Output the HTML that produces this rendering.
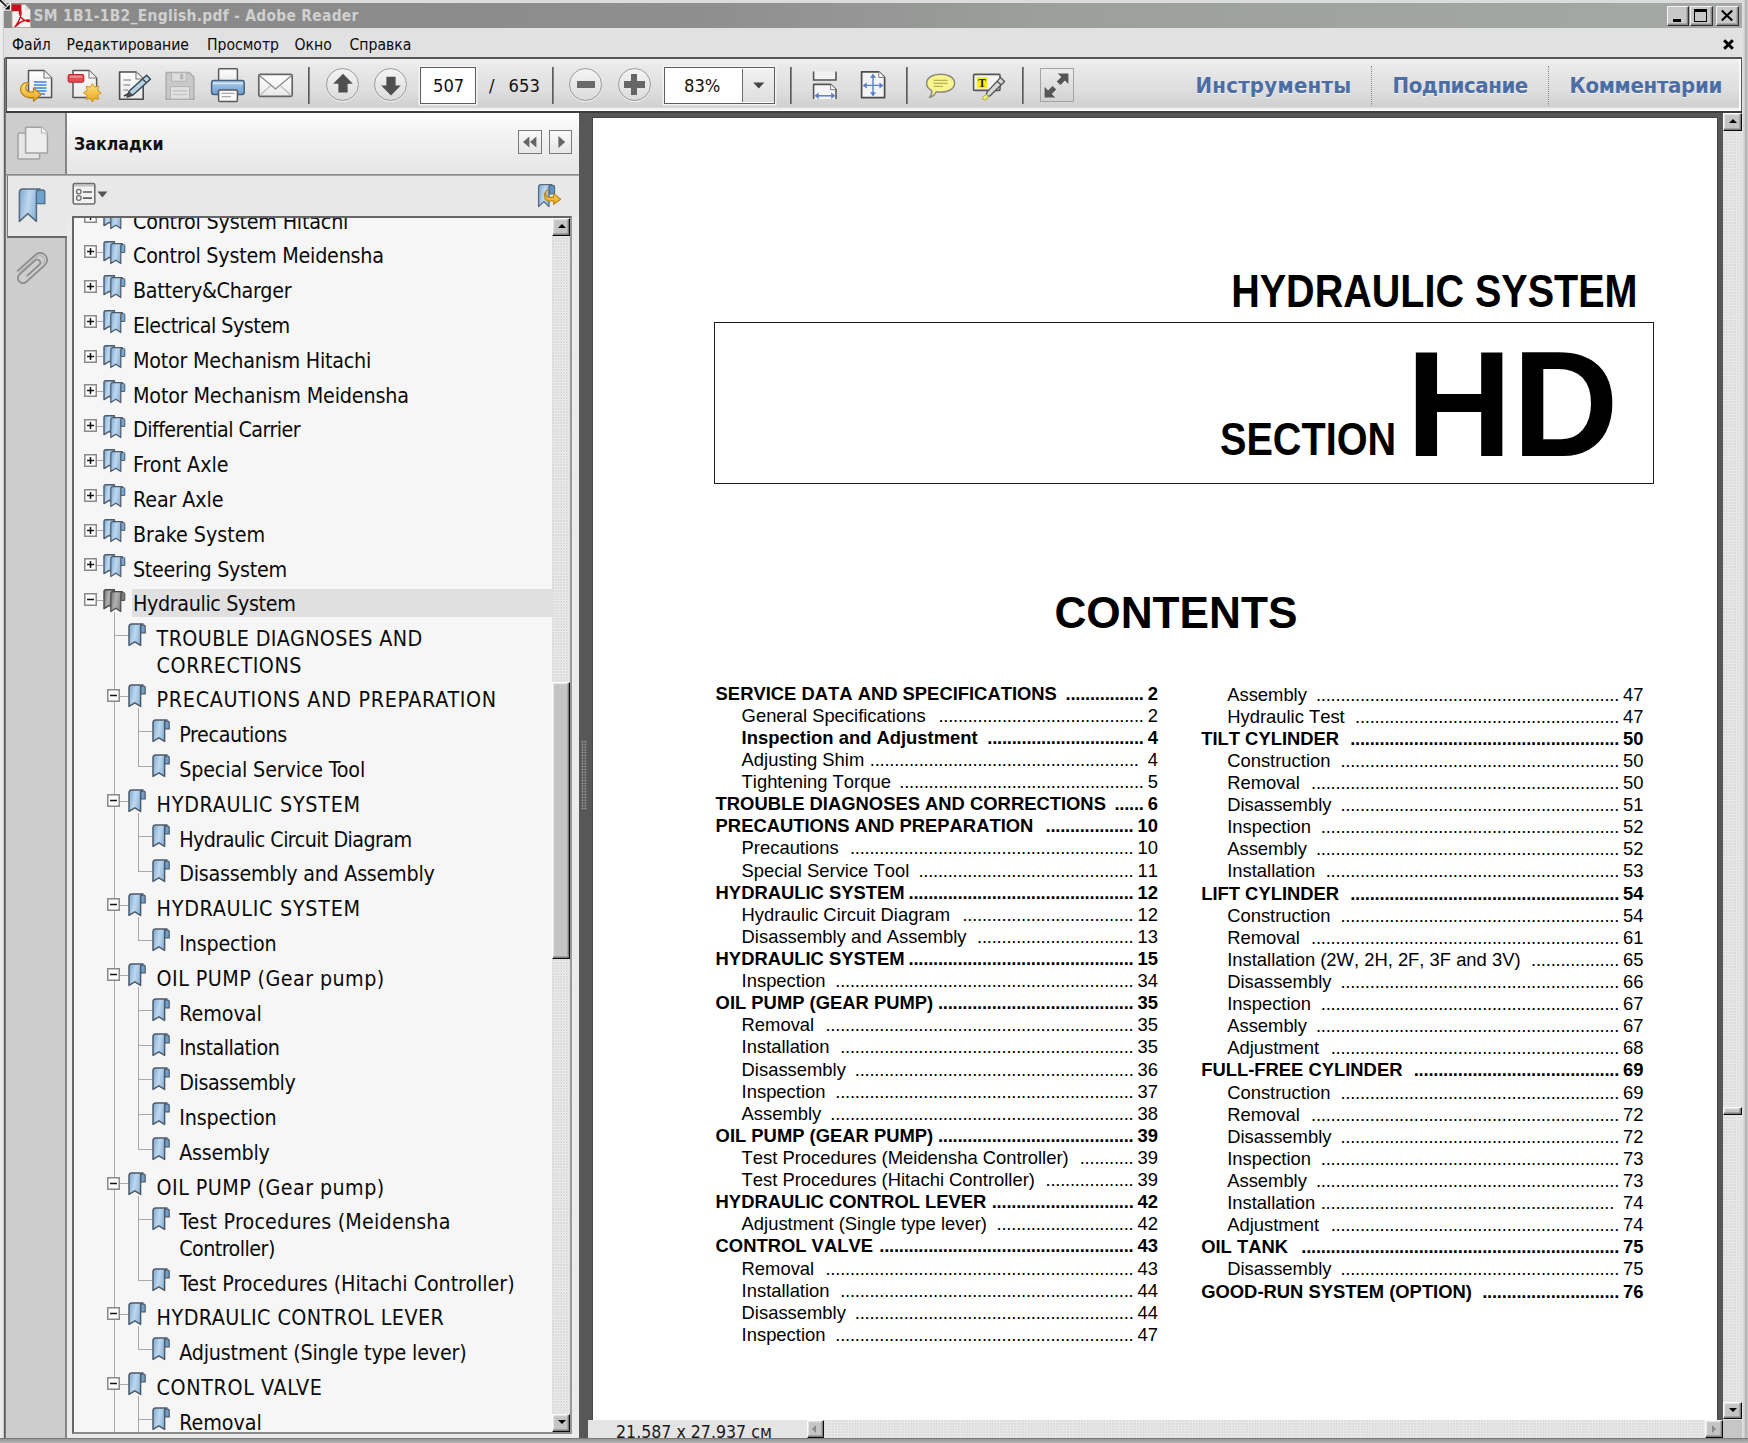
<!DOCTYPE html>
<html lang="ru">
<head>
<meta charset="utf-8">
<title>SM 1B1-1B2_English.pdf - Adobe Reader</title>
<style>
*{box-sizing:border-box;margin:0;padding:0}
html,body{width:1748px;height:1443px;overflow:hidden;background:#e2e2e2}
body{position:relative;font-family:"DejaVu Sans Condensed","DejaVu Sans","Liberation Sans",sans-serif;font-stretch:condensed;color:#000}
.abs{position:absolute}
svg{position:absolute;overflow:visible}
/* window frame */
#frameL{left:0;top:0;width:5px;height:1443px;background:linear-gradient(90deg,#ededed 0,#e8e8e8 50%,#c6c6c6 75%,#aeaeae 100%)}
#frameLd{left:4px;top:58px;width:2px;height:1381px;background:linear-gradient(90deg,#4e4e4e,#8a8a8a)}
#frameT{left:0;top:0;width:1748px;height:3px;background:#dcdcdc}
#frameR{left:1742px;top:0;width:6px;height:1443px;background:linear-gradient(90deg,#e6e6e6 0,#cfcfcf 40%,#b4b4b4 60%,#c4c4c4 100%)}
#frameB{left:0;top:1438px;width:1748px;height:5px;background:linear-gradient(180deg,#6a6a6a 0,#9a9a9a 30%,#b4b4b4 100%)}
/* title */
#title{left:4px;top:3px;width:1738px;height:25px;background:linear-gradient(90deg,#898989 0%,#8e8e8e 40%,#9c9f9c 60%,#a5a9a5 100%)}
#title .txt{left:29.6px;top:3.2px;font-weight:bold;font-size:15.4px;letter-spacing:.3px;line-height:20px;color:#d0d0d0;white-space:nowrap}
.wbtn{top:3px;height:20px;background:#c8c8c8;border:1.4px solid;border-color:#f4f4f4 #303030 #303030 #f4f4f4;box-shadow:inset -1.4px -1.4px 0 #888}
/* menu */
#menu{left:4px;top:28px;width:1738px;height:30px;background:#e1e1e1}
#menu span{position:absolute;top:6.7px;font-size:15.6px;line-height:20px;color:#0a0a0a;white-space:nowrap}
/* toolbar */
#tb{left:5px;top:57px;width:1737px;height:56px;background:#555}
#tbin{left:7px;top:59px;width:1734px;height:52px;background:linear-gradient(180deg,#f2f2f2 0,#eaeaea 12%,#dedede 60%,#d0d0d0 92%,#f4f4f4 96%,#fff 100%);border-right:2px solid #f8f8f8}
.sep{top:67px;width:2px;height:37px;background:linear-gradient(90deg,#5c5c5c 0,#5c5c5c 60%,#c8c8c8 100%)}
.circ{width:33px;height:33px;border-radius:50%;border:1.3px solid #9a9a9a;background:linear-gradient(180deg,#f4f4f4,#dcdcdc);top:68px;box-shadow:0 1px 0 #f2f2f2}
.inp{top:67px;height:37px;background:#fff;border:1.6px solid #5e5e5e;box-shadow:0 0 0 1.5px rgba(245,245,245,.9)}
.tbt{top:75.2px;font-size:18.2px;line-height:22px;white-space:nowrap;color:#111}
.pane{top:70.6px;font-weight:bold;font-size:22px;line-height:30px;color:#4a6da6;white-space:nowrap;text-shadow:0 1px 0 #f4f4f4}
.dots{top:66px;width:0;height:40px;border-left:1.5px dotted #8a8a8a}
/* left */
#nav{left:6px;top:113px;width:60px;height:1325px;background:#cdcdcd}
#navdiv{left:65px;top:113px;width:2px;height:1325px;background:#858585}
#panel{left:67px;top:113px;width:512px;height:1325px;background:#ebebeb}
#phead{left:67px;top:113px;width:512px;height:61px;background:linear-gradient(180deg,#fff 0,#f4f4f4 30%,#e6e6e6 100%)}
#pline{left:6px;top:174px;width:573px;height:2px;background:linear-gradient(180deg,#858585,#b0b0b0)}
#seltab{left:7px;top:176px;width:59.5px;height:62px;background:#e8e8e8;border-left:1.5px solid #7a7a7a;border-bottom:2px solid #6a6a6a}
#ptool{left:67px;top:176px;width:512px;height:41px;background:#e8e8e8}
#ptitle{left:74px;top:131.6px;font-weight:bold;font-size:17.6px;line-height:24px;color:#111}
.cbtn{top:130.4px;width:23.4px;height:23.4px;border:1.8px solid #7a7a7a;background:linear-gradient(180deg,#fafafa,#e6e6e6)}
#tree{left:72px;top:216px;width:500px;height:1218px;background:#f6f6f6;border:2px solid;border-color:#666 #9a9a9a #8a8a8a #666;overflow:hidden}
#treein{left:0;top:0;width:478px;height:1214px;overflow:hidden;font-size:21.3px;line-height:26.4px;color:#0b0b0b}
.row{position:absolute;left:0;width:478px;white-space:nowrap}
.row .t{position:absolute;top:5.6px}
.row.u .t{font-size:22.1px}
.hl{position:absolute;left:57.5px;top:6px;width:421px;height:28.4px;background:#e0e0e0}
.xb{position:absolute;width:12.8px;height:12.8px;top:10.4px;background:#fff;border:1.5px solid #8a8a8a}
.xb i{position:absolute;left:1.8px;right:1.8px;top:4.1px;height:1.6px;background:#111}
.xb b{position:absolute;top:1.8px;bottom:1.8px;left:4.1px;width:1.6px;background:#111}
.ln{position:absolute;background:#a8a8a8}
/* scrollbars */
.track{background-color:#e4e4e4;background-image:conic-gradient(#f3f3f3 25%,#d6d6d6 0 50%,#f3f3f3 0 75%,#d6d6d6 0);background-size:2.8px 2.8px}
.b3d{background:#c4c4c4;border:1.6px solid;border-color:#fcfcfc #0c0c0c #0c0c0c #fcfcfc;box-shadow:inset -1.4px -1.4px 0 #7e7e7e,inset 1.2px 1.2px 0 #e2e2e2}
.ar{position:absolute;width:0;height:0;border-style:solid}
/* doc */
#doc{left:579px;top:113px;width:1163px;height:1325px;background:#575757}
#pdfpage{left:593px;top:119px;width:1124px;height:1301px;background:#fff;overflow:hidden;font-kerning:none;font-stretch:normal;font-family:"Liberation Sans",sans-serif}
#status{left:588px;top:1420px;width:219px;height:19px;background:#e4e4e4;font-size:17.6px;line-height:21px;color:#1a1a1a;white-space:nowrap;overflow:hidden}
.toc{position:absolute;font-size:18.4px;line-height:22.11px;color:#000}
.toc div{display:flex;height:22.11px;white-space:nowrap;align-items:baseline}
.toc .h{font-weight:bold}
.toc .s{padding-left:26px}
.toc .d{flex:1;overflow:hidden;direction:rtl;text-align:right;margin:0;letter-spacing:-.22px}
.toc .n{padding-left:4px}
</style>
</head>
<body>
<div class="abs" id="frameT"></div><div class="abs" id="frameL"></div><div class="abs" id="frameR"></div>
<div class="abs" id="title"><div class="abs txt">SM 1B1-1B2_English.pdf - Adobe Reader</div>
<div class="abs wbtn" style="left:1663px;width:22px"><i class="abs" style="left:5px;top:12px;width:8px;height:2.8px;background:#000"></i></div>
<div class="abs wbtn" style="left:1685.5px;width:23px"><i class="abs" style="left:3.5px;top:2px;width:13px;height:12.5px;border:1.6px solid #000;border-top-width:3px"></i></div>
<div class="abs wbtn" style="left:1712px;width:23px"><svg style="left:4px;top:3px" width="12" height="11" viewBox="0 0 12 11"><path d="M0.8 0.5 L11.2 10.5 M11.2 0.5 L0.8 10.5" stroke="#000" stroke-width="2.1" fill="none"/></svg></div>
</div>
<div class="abs" id="menu"><span style="left:8px">Файл</span><span style="left:62.5px">Редактирование</span><span style="left:203px">Просмотр</span><span style="left:290.5px">Окно</span><span style="left:345.5px">Справка</span>
<svg style="left:1719px;top:11px" width="11" height="11" viewBox="0 0 11 11"><path d="M1.2 1.2 L9.8 9.8 M9.8 1.2 L1.2 9.8" stroke="#000" stroke-width="3" fill="none"/></svg></div>
<svg style="left:11px;top:4px" width="20" height="24" viewBox="0 0 20 24">
<path d="M1 0.5 H14 L19.5 6 V23.5 H1 Z" fill="#f6f2f2" stroke="#b9a3a3" stroke-width="1"/>
<path d="M14 0.5 V6 H19.5 Z" fill="#dcdcdc"/>
<rect x="0.6" y="0.4" width="9.8" height="6.8" fill="#c4111c"/>
<path d="M5 21.5 C7.5 18 9.8 13 10 8.5 C10.2 6.5 8.2 6.6 8.4 8.8 C8.9 13.5 13 17.2 17 17.6 C19.2 17.8 19 15.8 17 15.9 C12.5 16.2 8 18.6 5.6 21.6 C4.4 23 3.6 22.6 5 21.5 Z" fill="none" stroke="#c4111c" stroke-width="1.5"/>
</svg>
<svg style="left:0;top:0" width="12" height="12" viewBox="0 0 12 12"><path d="M0 0 L6.5 6.5" stroke="#f4f4f4" stroke-width="3.4"/><path d="M10.4 10.2 L10.4 3 L3.2 10.2 Z" fill="#0a0a0a" stroke="#f4f4f4" stroke-width="1.2"/><path d="M0 0 L6.5 6.5" stroke="#111" stroke-width="1.7"/></svg>
<div class="abs" id="tb"></div><div class="abs" id="tbin"></div><div class="abs" style="left:5px;top:111.2px;width:1737px;height:2.2px;background:#3e3e3e"></div><svg width="0" height="0"><defs>
<linearGradient id="gDoc" x1="0" y1="0" x2="0" y2="1"><stop offset="0" stop-color="#ffffff"/><stop offset="1" stop-color="#e9e9e9"/></linearGradient>
<linearGradient id="gGold" x1="0" y1="0" x2="0" y2="1"><stop offset="0" stop-color="#ffe680"/><stop offset="1" stop-color="#e9a21a"/></linearGradient>
<linearGradient id="gBlue" x1="0" y1="0" x2="0" y2="1"><stop offset="0" stop-color="#a9cdee"/><stop offset="1" stop-color="#6b9fd2"/></linearGradient>
<linearGradient id="gBm" x1="0" y1="0" x2="1" y2="0.25"><stop offset="0" stop-color="#7ba7d0"/><stop offset="0.5" stop-color="#bfd8ee"/><stop offset="1" stop-color="#84afd6"/></linearGradient>
<linearGradient id="gBmG" x1="0" y1="0" x2="1" y2="0.25"><stop offset="0" stop-color="#6e6e6e"/><stop offset="0.5" stop-color="#b4b4b4"/><stop offset="1" stop-color="#7c7c7c"/></linearGradient>
<linearGradient id="gBtn" x1="0" y1="0" x2="0" y2="1"><stop offset="0" stop-color="#ececec"/><stop offset="1" stop-color="#cfcfcf"/></linearGradient>
</defs></svg>
<!-- icon1: convert -->
<svg style="left:18px;top:67px" width="36" height="36" viewBox="0 0 36 36">
<path d="M10.5 3.6 H26 L33.6 11 V30.6 H10.5 Z" fill="url(#gDoc)" stroke="#555" stroke-width="1.5" stroke-linejoin="round"/>
<path d="M26 3.6 V11 H33.6" fill="#f4f4f4" stroke="#777" stroke-width="1.1"/>
<path d="M16 15 H28.5 M16 18 H28.5 M16 21 H28.5 M16 24 H28.5 M20 27 H27" stroke="#3b82e0" stroke-width="1.7"/>
<path d="M10.5 15.6 C4 15 0.8 21 3.6 26 C6 30 11 31 15.5 30.3 V34.2 L23 27.6 L15.5 21 V24.8 C12 25.4 9 24.6 8 22 C7.2 19.6 8.6 17.6 10.5 17 Z" fill="url(#gGold)" stroke="#b8800f" stroke-width="1.2" stroke-linejoin="round"/>
</svg>
<!-- icon2: create pdf -->
<svg style="left:66px;top:67px" width="36" height="36" viewBox="0 0 36 36">
<path d="M7 3.6 H23 L30.6 11 V30.6 H7 Z" fill="url(#gDoc)" stroke="#555" stroke-width="1.5" stroke-linejoin="round"/>
<path d="M23 3.6 V11 H30.6" fill="#f4f4f4" stroke="#777" stroke-width="1.1"/>
<rect x="2.2" y="7.6" width="15.6" height="7.6" rx="1.6" fill="#ea4a52" stroke="#b3262e" stroke-width="1.1"/>
<rect x="3.4" y="8.6" width="13.2" height="2.2" rx="1" fill="#f58a8e"/>
<polygon points="26.4,16.6 28.5,20.2 32.6,19.2 31.6,23.3 35.2,25.8 31.6,28.3 32.6,32.4 28.5,31.4 26.4,35 24.3,31.4 20.2,32.4 21.2,28.3 17.6,25.8 21.2,23.3 20.2,19.2 24.3,20.2" fill="url(#gGold)" stroke="#c8951e" stroke-width="1"/>
</svg>
<!-- icon3: sign -->
<svg style="left:116px;top:67px" width="36" height="36" viewBox="0 0 36 36">
<path d="M3.6 5 H20 L27.2 12 V32.2 H3.6 Z" fill="url(#gDoc)" stroke="#4c4c4c" stroke-width="1.6" stroke-linejoin="round"/>
<path d="M20 5 V12 H27.2" fill="#f4f4f4" stroke="#777" stroke-width="1.1"/>
<path d="M7.5 13 H15 M7.5 18 H14 M7.5 23 H12" stroke="#a0a0a0" stroke-width="1.3"/>
<path d="M8 29 L14 26" stroke="#333" stroke-width="1.4"/>
<path d="M30.6 8.2 L34.4 12.2 L17 28 L11.2 30 L13 24.2 Z" fill="#b4d2e8" stroke="#3e464e" stroke-width="1.5" stroke-linejoin="round"/>
<path d="M27 12.6 L30.4 15.8" stroke="#3e464e" stroke-width="1.4"/>
<path d="M11.2 30 L13 24.2 L17 28 Z" fill="#4a4a4a"/>
</svg>
<!-- icon4: floppy (disabled) -->
<svg style="left:164px;top:70px" width="32" height="32" viewBox="0 0 32 32">
<path d="M2.2 2.6 H25.4 L29.8 7 V29.2 H2.2 Z" fill="#c9c9c9" stroke="#adadad" stroke-width="1.5" stroke-linejoin="round"/>
<rect x="7.6" y="2.8" width="14.6" height="8.4" fill="#dedede" stroke="#b4b4b4" stroke-width="1"/>
<rect x="16.2" y="4" width="3" height="5.4" fill="#b4b4b4"/>
<rect x="6.4" y="16.6" width="19.2" height="12.4" fill="#e0e0e0" stroke="#b4b4b4" stroke-width="1"/>
<path d="M9 21 H23 M9 24.6 H23" stroke="#c4c4c4" stroke-width="1.4"/>
</svg>
<!-- icon5: printer -->
<svg style="left:209px;top:66px" width="38" height="38" viewBox="0 0 38 38">
<rect x="9.6" y="2.8" width="18.8" height="13" rx="1" fill="url(#gDoc)" stroke="#5a5a5a" stroke-width="1.5"/>
<path d="M4.6 14.4 Q2.6 14.4 2.6 16.6 V26.2 Q2.6 28.4 4.8 28.4 H33 Q35.2 28.4 35.2 26.2 V16.6 Q35.2 14.4 33.2 14.4 Z" fill="url(#gBlue)" stroke="#48607a" stroke-width="1.5"/>
<path d="M4 17.4 H33.8" stroke="#d6e8f8" stroke-width="1.6"/>
<rect x="9.6" y="24" width="18.8" height="11.6" rx="1" fill="#fafafa" stroke="#5a5a5a" stroke-width="1.5"/>
<path d="M12.6 27.4 H25.4 M12.6 30.6 H22" stroke="#aaa" stroke-width="1.4"/>
</svg>
<!-- icon6: envelope -->
<svg style="left:256px;top:70px" width="40" height="30" viewBox="0 0 40 30">
<rect x="2.8" y="4.4" width="33.4" height="22" rx="1.6" fill="url(#gDoc)" stroke="#666" stroke-width="1.7"/>
<path d="M4 6 L19.5 19 L35 6" fill="none" stroke="#8a8a8a" stroke-width="1.3"/>
<path d="M4 25.4 L14.6 15.6 M35 25.4 L24.4 15.6" stroke="#b4b4b4" stroke-width="1.1"/>
</svg>
<div class="abs sep" style="left:308.4px"></div>
<!-- up/down -->
<div class="abs circ" style="left:326.4px"></div>
<svg style="left:326px;top:68px" width="34" height="34" viewBox="0 0 34 34"><path d="M17 5.8 L26.8 15.8 H21.6 V24.4 H12.4 V15.8 H7.2 Z" fill="#4f4f4f"/></svg>
<div class="abs circ" style="left:374px"></div>
<svg style="left:373.6px;top:68px" width="34" height="34" viewBox="0 0 34 34"><path d="M17 27.4 L26.8 17.4 H21.6 V8.8 H12.4 V17.4 H7.2 Z" fill="#4f4f4f"/></svg>
<div class="abs inp" style="left:420.4px;width:56px"></div>
<div class="abs tbt" style="left:433px">507</div>
<div class="abs tbt" style="left:489px">/</div>
<div class="abs tbt" style="left:508.6px">653</div>
<div class="abs sep" style="left:552px"></div>
<div class="abs circ" style="left:569.4px"></div>
<div class="abs" style="left:577px;top:81.4px;width:18px;height:6.8px;background:#6a6a6a"></div>
<div class="abs circ" style="left:617.6px"></div>
<div class="abs" style="left:623.6px;top:81.4px;width:21px;height:6.8px;background:#666"></div>
<div class="abs" style="left:630.7px;top:74.4px;width:6.8px;height:20.8px;background:#666"></div>
<div class="abs inp" style="left:663.5px;width:111.6px"></div>
<div class="abs" style="left:742.4px;top:68.6px;width:31.2px;height:33.8px;background:linear-gradient(180deg,#f2f2f2,#dedede);border-left:1.5px solid #6c6c6c"></div>
<div class="abs tbt" style="left:684px">83%</div>
<svg style="left:753px;top:82px" width="12" height="7" viewBox="0 0 12 7"><path d="M0.2 0.4 H11.4 L5.8 6.4 Z" fill="#444"/></svg>
<div class="abs sep" style="left:789.8px"></div>
<!-- fit width -->
<svg style="left:810px;top:69px" width="30" height="32" viewBox="0 0 30 32">
<path d="M3.6 2.4 V11 H26 V2.4" fill="#f2f2f2" stroke="#555" stroke-width="1.6"/>
<path d="M3.6 30 V15.4 H20.6 L26 20.6 V30" fill="#f6f6f6" stroke="#555" stroke-width="1.6" stroke-linejoin="round"/>
<path d="M20.6 15.4 V20.6 H26" fill="#fff" stroke="#777" stroke-width="1"/>
<path d="M6 26.8 H24" stroke="#5b7fc4" stroke-width="1.5"/><path d="M4.4 26.8 L8.6 23.6 V30 Z M25.4 26.8 L21.2 23.6 V30 Z" fill="#5b7fc4"/>
</svg>
<!-- fit page -->
<svg style="left:858px;top:69px" width="30" height="32" viewBox="0 0 30 32">
<path d="M3.6 2.8 H20.8 L26.6 8.4 V28.6 H3.6 Z" fill="#f4f4f4" stroke="#4c4c4c" stroke-width="1.7" stroke-linejoin="round"/>
<path d="M20.8 2.8 V8.4 H26.6" fill="#fff" stroke="#777" stroke-width="1"/>
<path d="M15 7 V25.4 M6.4 16.4 H24" stroke="#5b7fc4" stroke-width="1.4"/>
<path d="M15 4.6 L12 8.8 H18 Z M15 27.4 L12 23.2 H18 Z M4.6 16.4 L8.8 13.4 V19.4 Z M25.6 16.4 L21.4 13.4 V19.4 Z" fill="#5b7fc4"/>
</svg>
<div class="abs sep" style="left:905.8px"></div>
<!-- comment -->
<svg style="left:924px;top:71px" width="34" height="30" viewBox="0 0 34 30">
<path d="M16.6 3.2 C25 3.2 30.6 7 30.6 12.2 C30.6 17.4 25 21.2 16.6 21.2 C15 21.2 13.6 21.1 12.2 20.8 C11 23.6 9 25.6 5.6 26.4 C7.6 24.2 8.2 22 7.6 19.4 C4.4 17.8 2.6 15.2 2.6 12.2 C2.6 7 8.2 3.2 16.6 3.2 Z" fill="#f8f48e" stroke="#8c8c7c" stroke-width="1.5" stroke-linejoin="round"/>
<path d="M9.6 9.4 H23.6 M9.6 12.4 H23.6 M9.6 15.4 H19" stroke="#b9b35c" stroke-width="1.3"/>
</svg>
<!-- highlight -->
<svg style="left:970px;top:70px" width="38" height="32" viewBox="0 0 38 32">
<rect x="3.6" y="4.4" width="26.4" height="16" rx="1" fill="#f4f4f4" stroke="#555" stroke-width="1.6"/>
<rect x="6.8" y="7.2" width="10.6" height="11.2" fill="#f5f014"/>
<text x="12.1" y="16.8" font-family="Liberation Serif,serif" font-weight="bold" font-size="11.5" text-anchor="middle" fill="#222">T</text>
<path d="M30.4 7.6 L34.6 11.4 L20.4 25.6 L16.2 27 L16.8 22.4 Z" fill="#d8d8d8" stroke="#555" stroke-width="1.4" stroke-linejoin="round"/>
<path d="M27 11.2 L31 14.8" stroke="#555" stroke-width="1.3"/>
<ellipse cx="15.4" cy="27.4" rx="3.2" ry="2" transform="rotate(-35 15.4 27.4)" fill="#eef07a" stroke="#a8a83c" stroke-width="0.9"/>
</svg>
<div class="abs sep" style="left:1021.8px"></div>
<!-- read mode -->
<div class="abs" style="left:1039.6px;top:68.4px;width:34px;height:34px;border:1.5px solid #a4a4a4;background:linear-gradient(180deg,#ececec,#d2d2d2)"></div>
<svg style="left:1040px;top:69px" width="33" height="33" viewBox="0 0 33 33">
<path d="M28.4 4.4 V15 L24.9 11.5 L20.4 16 L16.8 12.4 L21.3 7.9 L17.8 4.4 Z" fill="#555"/>
<path d="M4.6 28.6 V18 L8.1 21.5 L12.6 17 L16.2 20.6 L11.7 25.1 L15.2 28.6 Z" fill="#555"/>
</svg>
<div class="abs pane" style="left:1195.4px;letter-spacing:.26px">Инструменты</div>
<div class="abs dots" style="left:1371px"></div>
<div class="abs pane" style="left:1392.6px;letter-spacing:-.45px">Подписание</div>
<div class="abs dots" style="left:1548.2px"></div>
<div class="abs pane" style="left:1569.6px;letter-spacing:-.32px">Комментарии</div>
<div class="abs" id="nav"></div><div class="abs" id="panel"></div><div class="abs" id="phead"></div><div class="abs" id="navdiv"></div>
<div class="abs" id="ptool"></div><div class="abs" id="pline"></div><div class="abs" id="seltab"></div>
<div class="abs" id="ptitle">Закладки</div>
<!-- pages icon -->
<svg style="left:14px;top:122px" width="40" height="42" viewBox="0 0 40 42">
<rect x="4" y="11" width="21.6" height="26" rx="1.2" fill="#e6e6e6" stroke="#a2a2a2" stroke-width="1.5"/>
<path d="M11.6 5.2 H27.4 L33.4 11 V31 H11.6 Z" fill="#eeeeee" stroke="#a2a2a2" stroke-width="1.5" stroke-linejoin="round"/>
<path d="M27.4 5.2 V11 H33.4" fill="#fafafa" stroke="#b0b0b0" stroke-width="1"/>
</svg>
<!-- bookmark tab icon -->
<svg style="left:16px;top:186px" width="32" height="38" viewBox="0 0 32 38">
<path d="M20 4 H26.8 Q28.8 4 28.8 6 V17.6 H20 Z" fill="#6fa3cf" stroke="#566a80" stroke-width="1.3"/>
<path d="M3.4 6.4 Q3.4 3 7 3 H24 Q20.4 3.4 20.4 7 V35.4 L11.8 27.6 L3.4 35.4 Z" fill="url(#gBm)" stroke="#566a80" stroke-width="1.5" stroke-linejoin="round"/>
</svg>
<!-- paperclip -->
<svg style="left:8.6px;top:249px" width="40" height="42" viewBox="0 0 40 42">
<g transform="rotate(48 20 21) translate(0 -1)" fill="none" stroke="#8a8a8a" stroke-width="1.7" stroke-linecap="round">
<path d="M13 31 V7 A7 7 0 0 1 27 7 V32 A5 5 0 0 1 17 32 V11 A3 3 0 0 1 23 11 V27"/>
<path d="M15.4 31 V7.4 A4.6 4.6 0 0 1 24.6 7.4" stroke="#b0b0b0" stroke-width="1.2"/>
</g>
</svg>
<!-- options -->
<svg style="left:71px;top:181px" width="40" height="26" viewBox="0 0 40 26">
<rect x="2.2" y="2.6" width="21.6" height="20.4" rx="1.6" fill="#f2f2f2" stroke="#6e6e6e" stroke-width="1.6"/>
<path d="M3 4.6 H23" stroke="#c4c4c4" stroke-width="2"/>
<circle cx="7.8" cy="10.6" r="2.3" fill="none" stroke="#6e6e6e" stroke-width="1.3"/><circle cx="7.8" cy="17" r="2.3" fill="none" stroke="#6e6e6e" stroke-width="1.3"/>
<path d="M12 11 H21 M12 17.2 H21" stroke="#5e5e5e" stroke-width="1.7"/>
<path d="M26.4 10.6 H36.4 L31.4 16.6 Z" fill="#555"/>
</svg>
<!-- bookmark go -->
<svg style="left:536px;top:182px" width="28" height="28" viewBox="0 0 28 28">
<path d="M13 3.4 H17 Q18.6 3.4 18.6 5 V12 H13 Z" fill="#5f93c4" stroke="#566a80" stroke-width="1.1"/>
<path d="M2.6 5 Q2.6 2.6 5 2.6 H15.6 Q13 3 13 5.6 V24.6 L7.8 19.6 L2.6 24.6 Z" fill="url(#gBm)" stroke="#566a80" stroke-width="1.3" stroke-linejoin="round"/>
<path d="M12.4 7.6 C8.6 9 8.4 14.4 12.6 15.4 H17.6 V11.6 L24.6 17.2 L17.6 22.4 V19 H13 C8 18.6 6.2 11 12.4 7.6 Z" fill="url(#gGold)" stroke="#bb8512" stroke-width="1.1" stroke-linejoin="round"/>
</svg>
<div class="abs cbtn" style="left:518.4px"></div><div class="abs cbtn" style="left:548.6px"></div>
<svg style="left:518.4px;top:130px" width="24" height="24" viewBox="0 0 24 24"><path d="M11.4 6.4 V17.6 L5 12 Z M18.4 6.4 V17.6 L12 12 Z" fill="#666"/></svg>
<svg style="left:548.6px;top:130px" width="24" height="24" viewBox="0 0 24 24"><path d="M9.4 6 V18 L16.2 12 Z" fill="#666"/></svg>
<div class="abs" id="tree"><div class="abs" id="treein">
<i class="ln" style="left:40.4px;top:394.0px;width:1.1px;height:857.0px"></i>
<i class="ln" style="left:63.5px;top:490.4px;width:1.1px;height:57.8px"></i>
<i class="ln" style="left:63.5px;top:594.8px;width:1.1px;height:57.8px"></i>
<i class="ln" style="left:63.5px;top:699.2px;width:1.1px;height:23.0px"></i>
<i class="ln" style="left:63.5px;top:768.8px;width:1.1px;height:162.2px"></i>
<i class="ln" style="left:63.5px;top:977.6px;width:1.1px;height:84.2px"></i>
<i class="ln" style="left:63.5px;top:1108.4px;width:1.1px;height:23.0px"></i>
<i class="ln" style="left:63.5px;top:1178.0px;width:1.1px;height:44.0px"></i>
<i class="ln" style="left:22.8px;top:-1.2px;width:6.4px;height:1.1px"></i>
<svg style="left:10.0px;top:-7.6px" width="13" height="13" viewBox="0 0 12.8 12.8"><rect x="0.75" y="0.75" width="11.3" height="11.3" fill="#fff" stroke="#8a8a8a" stroke-width="1.5"/><path d="M3 6.4 H9.8" stroke="#111" stroke-width="1.5"/><path d="M6.4 3 V9.8" stroke="#111" stroke-width="1.5"/></svg>
<svg style="left:28.6px;top:-12.2px" width="23" height="24" viewBox="0 0 23 24"><path d="M1 2.6 Q1 0.8 2.8 0.8 H11.4 V19.6 L6.2 16.4 L1 19.6 Z" fill="url(#gBm)" stroke="#4c5a6a" stroke-width="1.4" stroke-linejoin="round"/><path d="M17.6 3.6 H20.6 Q21.8 3.6 21.8 4.8 V11.4 H17.6 Z" fill="#79a9d2" stroke="#4c5a6a" stroke-width="1"/><path d="M7.8 4.6 Q7.8 2.6 9.8 2.6 H19.4 Q17.8 3 17.8 5 V22.6 L12.8 19.2 L7.8 22.6 Z" fill="url(#gBm)" stroke="#4c5a6a" stroke-width="1.2" stroke-linejoin="round"/></svg>
<span class="abs" style="left:59.0px;top:-9.4px;letter-spacing:-0.21px;white-space:nowrap">Control System Hitachi</span>
<i class="ln" style="left:22.8px;top:33.6px;width:6.4px;height:1.1px"></i>
<svg style="left:10.0px;top:27.2px" width="13" height="13" viewBox="0 0 12.8 12.8"><rect x="0.75" y="0.75" width="11.3" height="11.3" fill="#fff" stroke="#8a8a8a" stroke-width="1.5"/><path d="M3 6.4 H9.8" stroke="#111" stroke-width="1.5"/><path d="M6.4 3 V9.8" stroke="#111" stroke-width="1.5"/></svg>
<svg style="left:28.6px;top:22.6px" width="23" height="24" viewBox="0 0 23 24"><path d="M1 2.6 Q1 0.8 2.8 0.8 H11.4 V19.6 L6.2 16.4 L1 19.6 Z" fill="url(#gBm)" stroke="#4c5a6a" stroke-width="1.4" stroke-linejoin="round"/><path d="M17.6 3.6 H20.6 Q21.8 3.6 21.8 4.8 V11.4 H17.6 Z" fill="#79a9d2" stroke="#4c5a6a" stroke-width="1"/><path d="M7.8 4.6 Q7.8 2.6 9.8 2.6 H19.4 Q17.8 3 17.8 5 V22.6 L12.8 19.2 L7.8 22.6 Z" fill="url(#gBm)" stroke="#4c5a6a" stroke-width="1.2" stroke-linejoin="round"/></svg>
<span class="abs" style="left:59.0px;top:25.4px;letter-spacing:-0.24px;white-space:nowrap">Control System Meidensha</span>
<i class="ln" style="left:22.8px;top:68.4px;width:6.4px;height:1.1px"></i>
<svg style="left:10.0px;top:62.0px" width="13" height="13" viewBox="0 0 12.8 12.8"><rect x="0.75" y="0.75" width="11.3" height="11.3" fill="#fff" stroke="#8a8a8a" stroke-width="1.5"/><path d="M3 6.4 H9.8" stroke="#111" stroke-width="1.5"/><path d="M6.4 3 V9.8" stroke="#111" stroke-width="1.5"/></svg>
<svg style="left:28.6px;top:57.4px" width="23" height="24" viewBox="0 0 23 24"><path d="M1 2.6 Q1 0.8 2.8 0.8 H11.4 V19.6 L6.2 16.4 L1 19.6 Z" fill="url(#gBm)" stroke="#4c5a6a" stroke-width="1.4" stroke-linejoin="round"/><path d="M17.6 3.6 H20.6 Q21.8 3.6 21.8 4.8 V11.4 H17.6 Z" fill="#79a9d2" stroke="#4c5a6a" stroke-width="1"/><path d="M7.8 4.6 Q7.8 2.6 9.8 2.6 H19.4 Q17.8 3 17.8 5 V22.6 L12.8 19.2 L7.8 22.6 Z" fill="url(#gBm)" stroke="#4c5a6a" stroke-width="1.2" stroke-linejoin="round"/></svg>
<span class="abs" style="left:59.0px;top:60.2px;letter-spacing:-0.28px;white-space:nowrap">Battery&amp;Charger</span>
<i class="ln" style="left:22.8px;top:103.2px;width:6.4px;height:1.1px"></i>
<svg style="left:10.0px;top:96.8px" width="13" height="13" viewBox="0 0 12.8 12.8"><rect x="0.75" y="0.75" width="11.3" height="11.3" fill="#fff" stroke="#8a8a8a" stroke-width="1.5"/><path d="M3 6.4 H9.8" stroke="#111" stroke-width="1.5"/><path d="M6.4 3 V9.8" stroke="#111" stroke-width="1.5"/></svg>
<svg style="left:28.6px;top:92.2px" width="23" height="24" viewBox="0 0 23 24"><path d="M1 2.6 Q1 0.8 2.8 0.8 H11.4 V19.6 L6.2 16.4 L1 19.6 Z" fill="url(#gBm)" stroke="#4c5a6a" stroke-width="1.4" stroke-linejoin="round"/><path d="M17.6 3.6 H20.6 Q21.8 3.6 21.8 4.8 V11.4 H17.6 Z" fill="#79a9d2" stroke="#4c5a6a" stroke-width="1"/><path d="M7.8 4.6 Q7.8 2.6 9.8 2.6 H19.4 Q17.8 3 17.8 5 V22.6 L12.8 19.2 L7.8 22.6 Z" fill="url(#gBm)" stroke="#4c5a6a" stroke-width="1.2" stroke-linejoin="round"/></svg>
<span class="abs" style="left:59.0px;top:95.0px;letter-spacing:-0.53px;white-space:nowrap">Electrical System</span>
<i class="ln" style="left:22.8px;top:138.0px;width:6.4px;height:1.1px"></i>
<svg style="left:10.0px;top:131.6px" width="13" height="13" viewBox="0 0 12.8 12.8"><rect x="0.75" y="0.75" width="11.3" height="11.3" fill="#fff" stroke="#8a8a8a" stroke-width="1.5"/><path d="M3 6.4 H9.8" stroke="#111" stroke-width="1.5"/><path d="M6.4 3 V9.8" stroke="#111" stroke-width="1.5"/></svg>
<svg style="left:28.6px;top:127.0px" width="23" height="24" viewBox="0 0 23 24"><path d="M1 2.6 Q1 0.8 2.8 0.8 H11.4 V19.6 L6.2 16.4 L1 19.6 Z" fill="url(#gBm)" stroke="#4c5a6a" stroke-width="1.4" stroke-linejoin="round"/><path d="M17.6 3.6 H20.6 Q21.8 3.6 21.8 4.8 V11.4 H17.6 Z" fill="#79a9d2" stroke="#4c5a6a" stroke-width="1"/><path d="M7.8 4.6 Q7.8 2.6 9.8 2.6 H19.4 Q17.8 3 17.8 5 V22.6 L12.8 19.2 L7.8 22.6 Z" fill="url(#gBm)" stroke="#4c5a6a" stroke-width="1.2" stroke-linejoin="round"/></svg>
<span class="abs" style="left:59.0px;top:129.8px;letter-spacing:-0.23px;white-space:nowrap">Motor Mechanism Hitachi</span>
<i class="ln" style="left:22.8px;top:172.8px;width:6.4px;height:1.1px"></i>
<svg style="left:10.0px;top:166.4px" width="13" height="13" viewBox="0 0 12.8 12.8"><rect x="0.75" y="0.75" width="11.3" height="11.3" fill="#fff" stroke="#8a8a8a" stroke-width="1.5"/><path d="M3 6.4 H9.8" stroke="#111" stroke-width="1.5"/><path d="M6.4 3 V9.8" stroke="#111" stroke-width="1.5"/></svg>
<svg style="left:28.6px;top:161.8px" width="23" height="24" viewBox="0 0 23 24"><path d="M1 2.6 Q1 0.8 2.8 0.8 H11.4 V19.6 L6.2 16.4 L1 19.6 Z" fill="url(#gBm)" stroke="#4c5a6a" stroke-width="1.4" stroke-linejoin="round"/><path d="M17.6 3.6 H20.6 Q21.8 3.6 21.8 4.8 V11.4 H17.6 Z" fill="#79a9d2" stroke="#4c5a6a" stroke-width="1"/><path d="M7.8 4.6 Q7.8 2.6 9.8 2.6 H19.4 Q17.8 3 17.8 5 V22.6 L12.8 19.2 L7.8 22.6 Z" fill="url(#gBm)" stroke="#4c5a6a" stroke-width="1.2" stroke-linejoin="round"/></svg>
<span class="abs" style="left:59.0px;top:164.6px;letter-spacing:-0.17px;white-space:nowrap">Motor Mechanism Meidensha</span>
<i class="ln" style="left:22.8px;top:207.6px;width:6.4px;height:1.1px"></i>
<svg style="left:10.0px;top:201.2px" width="13" height="13" viewBox="0 0 12.8 12.8"><rect x="0.75" y="0.75" width="11.3" height="11.3" fill="#fff" stroke="#8a8a8a" stroke-width="1.5"/><path d="M3 6.4 H9.8" stroke="#111" stroke-width="1.5"/><path d="M6.4 3 V9.8" stroke="#111" stroke-width="1.5"/></svg>
<svg style="left:28.6px;top:196.6px" width="23" height="24" viewBox="0 0 23 24"><path d="M1 2.6 Q1 0.8 2.8 0.8 H11.4 V19.6 L6.2 16.4 L1 19.6 Z" fill="url(#gBm)" stroke="#4c5a6a" stroke-width="1.4" stroke-linejoin="round"/><path d="M17.6 3.6 H20.6 Q21.8 3.6 21.8 4.8 V11.4 H17.6 Z" fill="#79a9d2" stroke="#4c5a6a" stroke-width="1"/><path d="M7.8 4.6 Q7.8 2.6 9.8 2.6 H19.4 Q17.8 3 17.8 5 V22.6 L12.8 19.2 L7.8 22.6 Z" fill="url(#gBm)" stroke="#4c5a6a" stroke-width="1.2" stroke-linejoin="round"/></svg>
<span class="abs" style="left:59.0px;top:199.4px;letter-spacing:-0.55px;white-space:nowrap">Differential Carrier</span>
<i class="ln" style="left:22.8px;top:242.4px;width:6.4px;height:1.1px"></i>
<svg style="left:10.0px;top:236.0px" width="13" height="13" viewBox="0 0 12.8 12.8"><rect x="0.75" y="0.75" width="11.3" height="11.3" fill="#fff" stroke="#8a8a8a" stroke-width="1.5"/><path d="M3 6.4 H9.8" stroke="#111" stroke-width="1.5"/><path d="M6.4 3 V9.8" stroke="#111" stroke-width="1.5"/></svg>
<svg style="left:28.6px;top:231.4px" width="23" height="24" viewBox="0 0 23 24"><path d="M1 2.6 Q1 0.8 2.8 0.8 H11.4 V19.6 L6.2 16.4 L1 19.6 Z" fill="url(#gBm)" stroke="#4c5a6a" stroke-width="1.4" stroke-linejoin="round"/><path d="M17.6 3.6 H20.6 Q21.8 3.6 21.8 4.8 V11.4 H17.6 Z" fill="#79a9d2" stroke="#4c5a6a" stroke-width="1"/><path d="M7.8 4.6 Q7.8 2.6 9.8 2.6 H19.4 Q17.8 3 17.8 5 V22.6 L12.8 19.2 L7.8 22.6 Z" fill="url(#gBm)" stroke="#4c5a6a" stroke-width="1.2" stroke-linejoin="round"/></svg>
<span class="abs" style="left:59.0px;top:234.2px;letter-spacing:-0.04px;white-space:nowrap">Front Axle</span>
<i class="ln" style="left:22.8px;top:277.2px;width:6.4px;height:1.1px"></i>
<svg style="left:10.0px;top:270.8px" width="13" height="13" viewBox="0 0 12.8 12.8"><rect x="0.75" y="0.75" width="11.3" height="11.3" fill="#fff" stroke="#8a8a8a" stroke-width="1.5"/><path d="M3 6.4 H9.8" stroke="#111" stroke-width="1.5"/><path d="M6.4 3 V9.8" stroke="#111" stroke-width="1.5"/></svg>
<svg style="left:28.6px;top:266.2px" width="23" height="24" viewBox="0 0 23 24"><path d="M1 2.6 Q1 0.8 2.8 0.8 H11.4 V19.6 L6.2 16.4 L1 19.6 Z" fill="url(#gBm)" stroke="#4c5a6a" stroke-width="1.4" stroke-linejoin="round"/><path d="M17.6 3.6 H20.6 Q21.8 3.6 21.8 4.8 V11.4 H17.6 Z" fill="#79a9d2" stroke="#4c5a6a" stroke-width="1"/><path d="M7.8 4.6 Q7.8 2.6 9.8 2.6 H19.4 Q17.8 3 17.8 5 V22.6 L12.8 19.2 L7.8 22.6 Z" fill="url(#gBm)" stroke="#4c5a6a" stroke-width="1.2" stroke-linejoin="round"/></svg>
<span class="abs" style="left:59.0px;top:269.0px;letter-spacing:-0.12px;white-space:nowrap">Rear Axle</span>
<i class="ln" style="left:22.8px;top:312.0px;width:6.4px;height:1.1px"></i>
<svg style="left:10.0px;top:305.6px" width="13" height="13" viewBox="0 0 12.8 12.8"><rect x="0.75" y="0.75" width="11.3" height="11.3" fill="#fff" stroke="#8a8a8a" stroke-width="1.5"/><path d="M3 6.4 H9.8" stroke="#111" stroke-width="1.5"/><path d="M6.4 3 V9.8" stroke="#111" stroke-width="1.5"/></svg>
<svg style="left:28.6px;top:301.0px" width="23" height="24" viewBox="0 0 23 24"><path d="M1 2.6 Q1 0.8 2.8 0.8 H11.4 V19.6 L6.2 16.4 L1 19.6 Z" fill="url(#gBm)" stroke="#4c5a6a" stroke-width="1.4" stroke-linejoin="round"/><path d="M17.6 3.6 H20.6 Q21.8 3.6 21.8 4.8 V11.4 H17.6 Z" fill="#79a9d2" stroke="#4c5a6a" stroke-width="1"/><path d="M7.8 4.6 Q7.8 2.6 9.8 2.6 H19.4 Q17.8 3 17.8 5 V22.6 L12.8 19.2 L7.8 22.6 Z" fill="url(#gBm)" stroke="#4c5a6a" stroke-width="1.2" stroke-linejoin="round"/></svg>
<span class="abs" style="left:59.0px;top:303.8px;letter-spacing:-0.02px;white-space:nowrap">Brake System</span>
<i class="ln" style="left:22.8px;top:346.8px;width:6.4px;height:1.1px"></i>
<svg style="left:10.0px;top:340.4px" width="13" height="13" viewBox="0 0 12.8 12.8"><rect x="0.75" y="0.75" width="11.3" height="11.3" fill="#fff" stroke="#8a8a8a" stroke-width="1.5"/><path d="M3 6.4 H9.8" stroke="#111" stroke-width="1.5"/><path d="M6.4 3 V9.8" stroke="#111" stroke-width="1.5"/></svg>
<svg style="left:28.6px;top:335.8px" width="23" height="24" viewBox="0 0 23 24"><path d="M1 2.6 Q1 0.8 2.8 0.8 H11.4 V19.6 L6.2 16.4 L1 19.6 Z" fill="url(#gBm)" stroke="#4c5a6a" stroke-width="1.4" stroke-linejoin="round"/><path d="M17.6 3.6 H20.6 Q21.8 3.6 21.8 4.8 V11.4 H17.6 Z" fill="#79a9d2" stroke="#4c5a6a" stroke-width="1"/><path d="M7.8 4.6 Q7.8 2.6 9.8 2.6 H19.4 Q17.8 3 17.8 5 V22.6 L12.8 19.2 L7.8 22.6 Z" fill="url(#gBm)" stroke="#4c5a6a" stroke-width="1.2" stroke-linejoin="round"/></svg>
<span class="abs" style="left:59.0px;top:338.6px;letter-spacing:-0.30px;white-space:nowrap">Steering System</span>
<i class="abs" style="left:57.8px;top:371.0px;width:420.2px;height:28.4px;background:#e0e0e0"></i>
<i class="ln" style="left:22.8px;top:381.6px;width:6.4px;height:1.1px"></i>
<svg style="left:10.0px;top:375.2px" width="13" height="13" viewBox="0 0 12.8 12.8"><rect x="0.75" y="0.75" width="11.3" height="11.3" fill="#fff" stroke="#8a8a8a" stroke-width="1.5"/><path d="M3 6.4 H9.8" stroke="#111" stroke-width="1.5"/></svg>
<svg style="left:28.6px;top:370.6px" width="23" height="24" viewBox="0 0 23 24"><path d="M1 2.6 Q1 0.8 2.8 0.8 H11.4 V19.6 L6.2 16.4 L1 19.6 Z" fill="url(#gBmG)" stroke="#4a4a4a" stroke-width="1.4" stroke-linejoin="round"/><path d="M17.6 3.6 H20.6 Q21.8 3.6 21.8 4.8 V11.4 H17.6 Z" fill="#7d7d7d" stroke="#4a4a4a" stroke-width="1"/><path d="M7.8 4.6 Q7.8 2.6 9.8 2.6 H19.4 Q17.8 3 17.8 5 V22.6 L12.8 19.2 L7.8 22.6 Z" fill="url(#gBmG)" stroke="#4a4a4a" stroke-width="1.2" stroke-linejoin="round"/></svg>
<span class="abs" style="left:59.0px;top:373.4px;letter-spacing:-0.37px;white-space:nowrap">Hydraulic System</span>
<i class="ln" style="left:40.8px;top:417.0px;width:14.2px;height:1.1px"></i>
<svg style="left:54.4px;top:405.2px" width="18" height="24" viewBox="0 0 18 24"><path d="M12.4 2.2 H15.8 Q17.2 2.2 17.2 3.6 V9.8 H12.4 Z" fill="#6e9fcc" stroke="#4c5a6a" stroke-width="1.2"/><path d="M1 3.8 Q1 1 3.8 1 H15 Q12.6 1.4 12.6 3.8 V22.4 L6.8 18.8 L1 22.4 Z" fill="url(#gBm)" stroke="#4c5a6a" stroke-width="1.5" stroke-linejoin="round"/></svg>
<span class="abs" style="left:82.6px;top:408.2px;letter-spacing:0.37px;white-space:nowrap">TROUBLE DIAGNOSES AND</span>
<span class="abs" style="left:82.6px;top:434.6px;letter-spacing:0.54px;white-space:nowrap">CORRECTIONS</span>
<i class="ln" style="left:45.6px;top:478.2px;width:9.4px;height:1.1px"></i>
<svg style="left:33.2px;top:471.4px" width="13" height="13" viewBox="0 0 12.8 12.8"><rect x="0.75" y="0.75" width="11.3" height="11.3" fill="#fff" stroke="#8a8a8a" stroke-width="1.5"/><path d="M3 6.4 H9.8" stroke="#111" stroke-width="1.5"/></svg>
<svg style="left:54.4px;top:466.4px" width="18" height="24" viewBox="0 0 18 24"><path d="M12.4 2.2 H15.8 Q17.2 2.2 17.2 3.6 V9.8 H12.4 Z" fill="#6e9fcc" stroke="#4c5a6a" stroke-width="1.2"/><path d="M1 3.8 Q1 1 3.8 1 H15 Q12.6 1.4 12.6 3.8 V22.4 L6.8 18.8 L1 22.4 Z" fill="url(#gBm)" stroke="#4c5a6a" stroke-width="1.5" stroke-linejoin="round"/></svg>
<span class="abs" style="left:82.6px;top:469.4px;letter-spacing:0.69px;white-space:nowrap">PRECAUTIONS AND PREPARATION</span>
<i class="ln" style="left:63.8px;top:513.4px;width:14.6px;height:1.1px"></i>
<svg style="left:77.8px;top:501.4px" width="18" height="24" viewBox="0 0 18 24"><path d="M12.4 2.2 H15.8 Q17.2 2.2 17.2 3.6 V9.8 H12.4 Z" fill="#6e9fcc" stroke="#4c5a6a" stroke-width="1.2"/><path d="M1 3.8 Q1 1 3.8 1 H15 Q12.6 1.4 12.6 3.8 V22.4 L6.8 18.8 L1 22.4 Z" fill="url(#gBm)" stroke="#4c5a6a" stroke-width="1.5" stroke-linejoin="round"/></svg>
<span class="abs" style="left:105.2px;top:504.2px;letter-spacing:-0.35px;white-space:nowrap">Precautions</span>
<i class="ln" style="left:63.8px;top:548.2px;width:14.6px;height:1.1px"></i>
<svg style="left:77.8px;top:536.2px" width="18" height="24" viewBox="0 0 18 24"><path d="M12.4 2.2 H15.8 Q17.2 2.2 17.2 3.6 V9.8 H12.4 Z" fill="#6e9fcc" stroke="#4c5a6a" stroke-width="1.2"/><path d="M1 3.8 Q1 1 3.8 1 H15 Q12.6 1.4 12.6 3.8 V22.4 L6.8 18.8 L1 22.4 Z" fill="url(#gBm)" stroke="#4c5a6a" stroke-width="1.5" stroke-linejoin="round"/></svg>
<span class="abs" style="left:105.2px;top:539.0px;letter-spacing:-0.15px;white-space:nowrap">Special Service Tool</span>
<i class="ln" style="left:45.6px;top:582.6px;width:9.4px;height:1.1px"></i>
<svg style="left:33.2px;top:575.8px" width="13" height="13" viewBox="0 0 12.8 12.8"><rect x="0.75" y="0.75" width="11.3" height="11.3" fill="#fff" stroke="#8a8a8a" stroke-width="1.5"/><path d="M3 6.4 H9.8" stroke="#111" stroke-width="1.5"/></svg>
<svg style="left:54.4px;top:570.8px" width="18" height="24" viewBox="0 0 18 24"><path d="M12.4 2.2 H15.8 Q17.2 2.2 17.2 3.6 V9.8 H12.4 Z" fill="#6e9fcc" stroke="#4c5a6a" stroke-width="1.2"/><path d="M1 3.8 Q1 1 3.8 1 H15 Q12.6 1.4 12.6 3.8 V22.4 L6.8 18.8 L1 22.4 Z" fill="url(#gBm)" stroke="#4c5a6a" stroke-width="1.5" stroke-linejoin="round"/></svg>
<span class="abs" style="left:82.6px;top:573.8px;letter-spacing:0.72px;white-space:nowrap">HYDRAULIC SYSTEM</span>
<i class="ln" style="left:63.8px;top:617.8px;width:14.6px;height:1.1px"></i>
<svg style="left:77.8px;top:605.8px" width="18" height="24" viewBox="0 0 18 24"><path d="M12.4 2.2 H15.8 Q17.2 2.2 17.2 3.6 V9.8 H12.4 Z" fill="#6e9fcc" stroke="#4c5a6a" stroke-width="1.2"/><path d="M1 3.8 Q1 1 3.8 1 H15 Q12.6 1.4 12.6 3.8 V22.4 L6.8 18.8 L1 22.4 Z" fill="url(#gBm)" stroke="#4c5a6a" stroke-width="1.5" stroke-linejoin="round"/></svg>
<span class="abs" style="left:105.2px;top:608.6px;letter-spacing:-0.58px;white-space:nowrap">Hydraulic Circuit Diagram</span>
<i class="ln" style="left:63.8px;top:652.6px;width:14.6px;height:1.1px"></i>
<svg style="left:77.8px;top:640.6px" width="18" height="24" viewBox="0 0 18 24"><path d="M12.4 2.2 H15.8 Q17.2 2.2 17.2 3.6 V9.8 H12.4 Z" fill="#6e9fcc" stroke="#4c5a6a" stroke-width="1.2"/><path d="M1 3.8 Q1 1 3.8 1 H15 Q12.6 1.4 12.6 3.8 V22.4 L6.8 18.8 L1 22.4 Z" fill="url(#gBm)" stroke="#4c5a6a" stroke-width="1.5" stroke-linejoin="round"/></svg>
<span class="abs" style="left:105.2px;top:643.4px;letter-spacing:-0.26px;white-space:nowrap">Disassembly and Assembly</span>
<i class="ln" style="left:45.6px;top:687.0px;width:9.4px;height:1.1px"></i>
<svg style="left:33.2px;top:680.2px" width="13" height="13" viewBox="0 0 12.8 12.8"><rect x="0.75" y="0.75" width="11.3" height="11.3" fill="#fff" stroke="#8a8a8a" stroke-width="1.5"/><path d="M3 6.4 H9.8" stroke="#111" stroke-width="1.5"/></svg>
<svg style="left:54.4px;top:675.2px" width="18" height="24" viewBox="0 0 18 24"><path d="M12.4 2.2 H15.8 Q17.2 2.2 17.2 3.6 V9.8 H12.4 Z" fill="#6e9fcc" stroke="#4c5a6a" stroke-width="1.2"/><path d="M1 3.8 Q1 1 3.8 1 H15 Q12.6 1.4 12.6 3.8 V22.4 L6.8 18.8 L1 22.4 Z" fill="url(#gBm)" stroke="#4c5a6a" stroke-width="1.5" stroke-linejoin="round"/></svg>
<span class="abs" style="left:82.6px;top:678.2px;letter-spacing:0.72px;white-space:nowrap">HYDRAULIC SYSTEM</span>
<i class="ln" style="left:63.8px;top:722.2px;width:14.6px;height:1.1px"></i>
<svg style="left:77.8px;top:710.2px" width="18" height="24" viewBox="0 0 18 24"><path d="M12.4 2.2 H15.8 Q17.2 2.2 17.2 3.6 V9.8 H12.4 Z" fill="#6e9fcc" stroke="#4c5a6a" stroke-width="1.2"/><path d="M1 3.8 Q1 1 3.8 1 H15 Q12.6 1.4 12.6 3.8 V22.4 L6.8 18.8 L1 22.4 Z" fill="url(#gBm)" stroke="#4c5a6a" stroke-width="1.5" stroke-linejoin="round"/></svg>
<span class="abs" style="left:105.2px;top:713.0px;letter-spacing:-0.17px;white-space:nowrap">Inspection</span>
<i class="ln" style="left:45.6px;top:756.6px;width:9.4px;height:1.1px"></i>
<svg style="left:33.2px;top:749.8px" width="13" height="13" viewBox="0 0 12.8 12.8"><rect x="0.75" y="0.75" width="11.3" height="11.3" fill="#fff" stroke="#8a8a8a" stroke-width="1.5"/><path d="M3 6.4 H9.8" stroke="#111" stroke-width="1.5"/></svg>
<svg style="left:54.4px;top:744.8px" width="18" height="24" viewBox="0 0 18 24"><path d="M12.4 2.2 H15.8 Q17.2 2.2 17.2 3.6 V9.8 H12.4 Z" fill="#6e9fcc" stroke="#4c5a6a" stroke-width="1.2"/><path d="M1 3.8 Q1 1 3.8 1 H15 Q12.6 1.4 12.6 3.8 V22.4 L6.8 18.8 L1 22.4 Z" fill="url(#gBm)" stroke="#4c5a6a" stroke-width="1.5" stroke-linejoin="round"/></svg>
<span class="abs" style="left:82.6px;top:747.8px;letter-spacing:0.42px;white-space:nowrap">OIL PUMP (Gear pump)</span>
<i class="ln" style="left:63.8px;top:791.8px;width:14.6px;height:1.1px"></i>
<svg style="left:77.8px;top:779.8px" width="18" height="24" viewBox="0 0 18 24"><path d="M12.4 2.2 H15.8 Q17.2 2.2 17.2 3.6 V9.8 H12.4 Z" fill="#6e9fcc" stroke="#4c5a6a" stroke-width="1.2"/><path d="M1 3.8 Q1 1 3.8 1 H15 Q12.6 1.4 12.6 3.8 V22.4 L6.8 18.8 L1 22.4 Z" fill="url(#gBm)" stroke="#4c5a6a" stroke-width="1.5" stroke-linejoin="round"/></svg>
<span class="abs" style="left:105.2px;top:782.6px;letter-spacing:-0.05px;white-space:nowrap">Removal</span>
<i class="ln" style="left:63.8px;top:826.6px;width:14.6px;height:1.1px"></i>
<svg style="left:77.8px;top:814.6px" width="18" height="24" viewBox="0 0 18 24"><path d="M12.4 2.2 H15.8 Q17.2 2.2 17.2 3.6 V9.8 H12.4 Z" fill="#6e9fcc" stroke="#4c5a6a" stroke-width="1.2"/><path d="M1 3.8 Q1 1 3.8 1 H15 Q12.6 1.4 12.6 3.8 V22.4 L6.8 18.8 L1 22.4 Z" fill="url(#gBm)" stroke="#4c5a6a" stroke-width="1.5" stroke-linejoin="round"/></svg>
<span class="abs" style="left:105.2px;top:817.4px;letter-spacing:-0.50px;white-space:nowrap">Installation</span>
<i class="ln" style="left:63.8px;top:861.4px;width:14.6px;height:1.1px"></i>
<svg style="left:77.8px;top:849.4px" width="18" height="24" viewBox="0 0 18 24"><path d="M12.4 2.2 H15.8 Q17.2 2.2 17.2 3.6 V9.8 H12.4 Z" fill="#6e9fcc" stroke="#4c5a6a" stroke-width="1.2"/><path d="M1 3.8 Q1 1 3.8 1 H15 Q12.6 1.4 12.6 3.8 V22.4 L6.8 18.8 L1 22.4 Z" fill="url(#gBm)" stroke="#4c5a6a" stroke-width="1.5" stroke-linejoin="round"/></svg>
<span class="abs" style="left:105.2px;top:852.2px;letter-spacing:-0.44px;white-space:nowrap">Disassembly</span>
<i class="ln" style="left:63.8px;top:896.2px;width:14.6px;height:1.1px"></i>
<svg style="left:77.8px;top:884.2px" width="18" height="24" viewBox="0 0 18 24"><path d="M12.4 2.2 H15.8 Q17.2 2.2 17.2 3.6 V9.8 H12.4 Z" fill="#6e9fcc" stroke="#4c5a6a" stroke-width="1.2"/><path d="M1 3.8 Q1 1 3.8 1 H15 Q12.6 1.4 12.6 3.8 V22.4 L6.8 18.8 L1 22.4 Z" fill="url(#gBm)" stroke="#4c5a6a" stroke-width="1.5" stroke-linejoin="round"/></svg>
<span class="abs" style="left:105.2px;top:887.0px;letter-spacing:-0.17px;white-space:nowrap">Inspection</span>
<i class="ln" style="left:63.8px;top:931.0px;width:14.6px;height:1.1px"></i>
<svg style="left:77.8px;top:919.0px" width="18" height="24" viewBox="0 0 18 24"><path d="M12.4 2.2 H15.8 Q17.2 2.2 17.2 3.6 V9.8 H12.4 Z" fill="#6e9fcc" stroke="#4c5a6a" stroke-width="1.2"/><path d="M1 3.8 Q1 1 3.8 1 H15 Q12.6 1.4 12.6 3.8 V22.4 L6.8 18.8 L1 22.4 Z" fill="url(#gBm)" stroke="#4c5a6a" stroke-width="1.5" stroke-linejoin="round"/></svg>
<span class="abs" style="left:105.2px;top:921.8px;letter-spacing:-0.23px;white-space:nowrap">Assembly</span>
<i class="ln" style="left:45.6px;top:965.4px;width:9.4px;height:1.1px"></i>
<svg style="left:33.2px;top:958.6px" width="13" height="13" viewBox="0 0 12.8 12.8"><rect x="0.75" y="0.75" width="11.3" height="11.3" fill="#fff" stroke="#8a8a8a" stroke-width="1.5"/><path d="M3 6.4 H9.8" stroke="#111" stroke-width="1.5"/></svg>
<svg style="left:54.4px;top:953.6px" width="18" height="24" viewBox="0 0 18 24"><path d="M12.4 2.2 H15.8 Q17.2 2.2 17.2 3.6 V9.8 H12.4 Z" fill="#6e9fcc" stroke="#4c5a6a" stroke-width="1.2"/><path d="M1 3.8 Q1 1 3.8 1 H15 Q12.6 1.4 12.6 3.8 V22.4 L6.8 18.8 L1 22.4 Z" fill="url(#gBm)" stroke="#4c5a6a" stroke-width="1.5" stroke-linejoin="round"/></svg>
<span class="abs" style="left:82.6px;top:956.6px;letter-spacing:0.42px;white-space:nowrap">OIL PUMP (Gear pump)</span>
<i class="ln" style="left:63.8px;top:1000.6px;width:14.6px;height:1.1px"></i>
<svg style="left:77.8px;top:988.6px" width="18" height="24" viewBox="0 0 18 24"><path d="M12.4 2.2 H15.8 Q17.2 2.2 17.2 3.6 V9.8 H12.4 Z" fill="#6e9fcc" stroke="#4c5a6a" stroke-width="1.2"/><path d="M1 3.8 Q1 1 3.8 1 H15 Q12.6 1.4 12.6 3.8 V22.4 L6.8 18.8 L1 22.4 Z" fill="url(#gBm)" stroke="#4c5a6a" stroke-width="1.5" stroke-linejoin="round"/></svg>
<span class="abs" style="left:105.2px;top:991.4px;letter-spacing:0.18px;white-space:nowrap">Test Procedures (Meidensha</span>
<span class="abs" style="left:105.2px;top:1017.8px;letter-spacing:-0.55px;white-space:nowrap">Controller)</span>
<i class="ln" style="left:63.8px;top:1061.8px;width:14.6px;height:1.1px"></i>
<svg style="left:77.8px;top:1049.8px" width="18" height="24" viewBox="0 0 18 24"><path d="M12.4 2.2 H15.8 Q17.2 2.2 17.2 3.6 V9.8 H12.4 Z" fill="#6e9fcc" stroke="#4c5a6a" stroke-width="1.2"/><path d="M1 3.8 Q1 1 3.8 1 H15 Q12.6 1.4 12.6 3.8 V22.4 L6.8 18.8 L1 22.4 Z" fill="url(#gBm)" stroke="#4c5a6a" stroke-width="1.5" stroke-linejoin="round"/></svg>
<span class="abs" style="left:105.2px;top:1052.6px;letter-spacing:-0.07px;white-space:nowrap">Test Procedures (Hitachi Controller)</span>
<i class="ln" style="left:45.6px;top:1096.2px;width:9.4px;height:1.1px"></i>
<svg style="left:33.2px;top:1089.4px" width="13" height="13" viewBox="0 0 12.8 12.8"><rect x="0.75" y="0.75" width="11.3" height="11.3" fill="#fff" stroke="#8a8a8a" stroke-width="1.5"/><path d="M3 6.4 H9.8" stroke="#111" stroke-width="1.5"/></svg>
<svg style="left:54.4px;top:1084.4px" width="18" height="24" viewBox="0 0 18 24"><path d="M12.4 2.2 H15.8 Q17.2 2.2 17.2 3.6 V9.8 H12.4 Z" fill="#6e9fcc" stroke="#4c5a6a" stroke-width="1.2"/><path d="M1 3.8 Q1 1 3.8 1 H15 Q12.6 1.4 12.6 3.8 V22.4 L6.8 18.8 L1 22.4 Z" fill="url(#gBm)" stroke="#4c5a6a" stroke-width="1.5" stroke-linejoin="round"/></svg>
<span class="abs" style="left:82.6px;top:1087.4px;letter-spacing:0.46px;white-space:nowrap">HYDRAULIC CONTROL LEVER</span>
<i class="ln" style="left:63.8px;top:1131.4px;width:14.6px;height:1.1px"></i>
<svg style="left:77.8px;top:1119.4px" width="18" height="24" viewBox="0 0 18 24"><path d="M12.4 2.2 H15.8 Q17.2 2.2 17.2 3.6 V9.8 H12.4 Z" fill="#6e9fcc" stroke="#4c5a6a" stroke-width="1.2"/><path d="M1 3.8 Q1 1 3.8 1 H15 Q12.6 1.4 12.6 3.8 V22.4 L6.8 18.8 L1 22.4 Z" fill="url(#gBm)" stroke="#4c5a6a" stroke-width="1.5" stroke-linejoin="round"/></svg>
<span class="abs" style="left:105.2px;top:1122.2px;letter-spacing:-0.19px;white-space:nowrap">Adjustment (Single type lever)</span>
<i class="ln" style="left:45.6px;top:1165.8px;width:9.4px;height:1.1px"></i>
<svg style="left:33.2px;top:1159.0px" width="13" height="13" viewBox="0 0 12.8 12.8"><rect x="0.75" y="0.75" width="11.3" height="11.3" fill="#fff" stroke="#8a8a8a" stroke-width="1.5"/><path d="M3 6.4 H9.8" stroke="#111" stroke-width="1.5"/></svg>
<svg style="left:54.4px;top:1154.0px" width="18" height="24" viewBox="0 0 18 24"><path d="M12.4 2.2 H15.8 Q17.2 2.2 17.2 3.6 V9.8 H12.4 Z" fill="#6e9fcc" stroke="#4c5a6a" stroke-width="1.2"/><path d="M1 3.8 Q1 1 3.8 1 H15 Q12.6 1.4 12.6 3.8 V22.4 L6.8 18.8 L1 22.4 Z" fill="url(#gBm)" stroke="#4c5a6a" stroke-width="1.5" stroke-linejoin="round"/></svg>
<span class="abs" style="left:82.6px;top:1157.0px;letter-spacing:0.61px;white-space:nowrap">CONTROL VALVE</span>
<i class="ln" style="left:63.8px;top:1201.0px;width:14.6px;height:1.1px"></i>
<svg style="left:77.8px;top:1189.0px" width="18" height="24" viewBox="0 0 18 24"><path d="M12.4 2.2 H15.8 Q17.2 2.2 17.2 3.6 V9.8 H12.4 Z" fill="#6e9fcc" stroke="#4c5a6a" stroke-width="1.2"/><path d="M1 3.8 Q1 1 3.8 1 H15 Q12.6 1.4 12.6 3.8 V22.4 L6.8 18.8 L1 22.4 Z" fill="url(#gBm)" stroke="#4c5a6a" stroke-width="1.5" stroke-linejoin="round"/></svg>
<span class="abs" style="left:105.2px;top:1191.8px;letter-spacing:-0.05px;white-space:nowrap">Removal</span>
</div>
<div class="abs track" style="left:478.2px;top:0px;width:17.8px;height:1214px"></div>
<div class="abs b3d" style="left:478.2px;top:0px;width:17.8px;height:17.6px"><i class="ar" style="left:4.6px;top:4.6px;border-width:0 4.2px 4.6px 4.2px;border-color:transparent transparent #000 transparent"></i></div>
<div class="abs b3d" style="left:478.2px;top:464.4px;width:17.8px;height:276.6px"></div>
<div class="abs b3d" style="left:478.2px;top:1196.4px;width:17.8px;height:17.6px"><i class="ar" style="left:4.6px;top:5px;border-width:4.6px 4.2px 0 4.2px;border-color:#000 transparent transparent transparent"></i></div>
</div>
<div class="abs" id="doc"></div>
<div class="abs" style="left:592px;top:117.4px;width:1126px;height:1303px;background:#474747"></div>
<div class="abs" style="left:593px;top:118.3px;width:1124px;height:2px;background:#fff"></div>
<div class="abs" id="pdfpage">
<div class="abs" style="right:79px;top:150px;font-weight:bold;font-size:45.4px;line-height:45.4px;white-space:nowrap;transform:scaleX(.871);transform-origin:100% 50%">HYDRAULIC SYSTEM</div>
<div class="abs" style="left:121.4px;top:203.2px;width:939.4px;height:161.6px;border:1.3px solid #1a1a1a"></div>
<div class="abs" style="left:627.4px;top:298.2px;font-weight:bold;font-size:45.4px;line-height:45.4px;white-space:nowrap;transform:scaleX(.873);transform-origin:0 50%">SECTION</div>
<div class="abs" style="left:813.4px;top:208.6px;font-weight:bold;font-size:151px;line-height:151px;white-space:nowrap;transform:scaleX(.975);transform-origin:0 50%">HD</div>
<div class="abs" style="left:461.4px;top:471.6px;font-weight:bold;font-size:44.2px;line-height:44.2px;white-space:nowrap">CONTENTS</div>
<div class="toc" style="left:122.6px;top:563.7px;width:442.4px">
<div class="h"><span>SERVICE DATA AND SPECIFICATIONS</span><span class="d">................</span><span class="n">2</span></div>
<div class="s"><span>General Specifications</span><span class="d">..........................................</span><span class="n">2</span></div>
<div class="s h"><span>Inspection and Adjustment</span><span class="d">................................</span><span class="n">4</span></div>
<div class="s"><span>Adjusting Shim</span><span class="d" style="margin-right:5px">.......................................................</span><span class="n">4</span></div>
<div class="s"><span>Tightening Torque</span><span class="d">..................................................</span><span class="n">5</span></div>
<div class="h"><span>TROUBLE DIAGNOSES AND CORRECTIONS</span><span class="d">......</span><span class="n">6</span></div>
<div class="h"><span>PRECAUTIONS AND PREPARATION</span><span class="d">..................</span><span class="n">10</span></div>
<div class="s"><span>Precautions</span><span class="d">..........................................................</span><span class="n">10</span></div>
<div class="s"><span>Special Service Tool</span><span class="d">............................................</span><span class="n">11</span></div>
<div class="h"><span>HYDRAULIC SYSTEM</span><span class="d">..............................................</span><span class="n">12</span></div>
<div class="s"><span>Hydraulic Circuit Diagram</span><span class="d">...................................</span><span class="n">12</span></div>
<div class="s"><span>Disassembly and Assembly</span><span class="d">................................</span><span class="n">13</span></div>
<div class="h"><span>HYDRAULIC SYSTEM</span><span class="d">..............................................</span><span class="n">15</span></div>
<div class="s"><span>Inspection</span><span class="d">.............................................................</span><span class="n">34</span></div>
<div class="h"><span>OIL PUMP (GEAR PUMP)</span><span class="d">........................................</span><span class="n">35</span></div>
<div class="s"><span>Removal</span><span class="d">...............................................................</span><span class="n">35</span></div>
<div class="s"><span>Installation</span><span class="d">............................................................</span><span class="n">35</span></div>
<div class="s"><span>Disassembly</span><span class="d">.........................................................</span><span class="n">36</span></div>
<div class="s"><span>Inspection</span><span class="d">.............................................................</span><span class="n">37</span></div>
<div class="s"><span>Assembly</span><span class="d">..............................................................</span><span class="n">38</span></div>
<div class="h"><span>OIL PUMP (GEAR PUMP)</span><span class="d">........................................</span><span class="n">39</span></div>
<div class="s"><span>Test Procedures (Meidensha Controller)</span><span class="d">...........</span><span class="n">39</span></div>
<div class="s"><span>Test Procedures (Hitachi Controller)</span><span class="d">..................</span><span class="n">39</span></div>
<div class="h"><span>HYDRAULIC CONTROL LEVER</span><span class="d">.............................</span><span class="n">42</span></div>
<div class="s"><span>Adjustment (Single type lever)</span><span class="d">............................</span><span class="n">42</span></div>
<div class="h"><span>CONTROL VALVE</span><span class="d">....................................................</span><span class="n">43</span></div>
<div class="s"><span>Removal</span><span class="d">...............................................................</span><span class="n">43</span></div>
<div class="s"><span>Installation</span><span class="d">............................................................</span><span class="n">44</span></div>
<div class="s"><span>Disassembly</span><span class="d">.........................................................</span><span class="n">44</span></div>
<div class="s"><span>Inspection</span><span class="d">.............................................................</span><span class="n">47</span></div>
</div>
<div class="toc" style="left:608.2px;top:564.6px;width:442.4px">
<div class="s"><span>Assembly</span><span class="d">..............................................................</span><span class="n">47</span></div>
<div class="s"><span>Hydraulic Test</span><span class="d">......................................................</span><span class="n">47</span></div>
<div class="h"><span>TILT CYLINDER</span><span class="d">.......................................................</span><span class="n">50</span></div>
<div class="s"><span>Construction</span><span class="d">.........................................................</span><span class="n">50</span></div>
<div class="s"><span>Removal</span><span class="d">...............................................................</span><span class="n">50</span></div>
<div class="s"><span>Disassembly</span><span class="d">.........................................................</span><span class="n">51</span></div>
<div class="s"><span>Inspection</span><span class="d">.............................................................</span><span class="n">52</span></div>
<div class="s"><span>Assembly</span><span class="d">..............................................................</span><span class="n">52</span></div>
<div class="s"><span>Installation</span><span class="d">............................................................</span><span class="n">53</span></div>
<div class="h"><span>LIFT CYLINDER</span><span class="d">.......................................................</span><span class="n">54</span></div>
<div class="s"><span>Construction</span><span class="d">.........................................................</span><span class="n">54</span></div>
<div class="s"><span>Removal</span><span class="d">...............................................................</span><span class="n">61</span></div>
<div class="s"><span>Installation (2W, 2H, 2F, 3F and 3V)</span><span class="d">..................</span><span class="n">65</span></div>
<div class="s"><span>Disassembly</span><span class="d">.........................................................</span><span class="n">66</span></div>
<div class="s"><span>Inspection</span><span class="d">.............................................................</span><span class="n">67</span></div>
<div class="s"><span>Assembly</span><span class="d">..............................................................</span><span class="n">67</span></div>
<div class="s"><span>Adjustment</span><span class="d">...........................................................</span><span class="n">68</span></div>
<div class="h"><span>FULL-FREE CYLINDER</span><span class="d">..........................................</span><span class="n">69</span></div>
<div class="s"><span>Construction</span><span class="d">.........................................................</span><span class="n">69</span></div>
<div class="s"><span>Removal</span><span class="d">...............................................................</span><span class="n">72</span></div>
<div class="s"><span>Disassembly</span><span class="d">.........................................................</span><span class="n">72</span></div>
<div class="s"><span>Inspection</span><span class="d">.............................................................</span><span class="n">73</span></div>
<div class="s"><span>Assembly</span><span class="d">..............................................................</span><span class="n">73</span></div>
<div class="s"><span>Installation</span><span class="d" style="margin-right:5px">............................................................</span><span class="n">74</span></div>
<div class="s"><span>Adjustment</span><span class="d">...........................................................</span><span class="n">74</span></div>
<div class="h"><span>OIL TANK</span><span class="d">.................................................................</span><span class="n">75</span></div>
<div class="s"><span>Disassembly</span><span class="d">.........................................................</span><span class="n">75</span></div>
<div class="h"><span>GOOD-RUN SYSTEM (OPTION)</span><span class="d">............................</span><span class="n">76</span></div>
</div>
</div>
<div class="abs" style="left:581px;top:739.6px;width:5.6px;height:70px;background-image:radial-gradient(circle,#a8a8a8 0.8px,transparent 1px);background-size:2.8px 2.8px"></div>
<div class="abs track" style="left:1723px;top:113px;width:18.6px;height:1307px"></div>
<div class="abs b3d" style="left:1723px;top:113px;width:18.6px;height:18px"><i class="ar" style="left:4.6px;top:4.8px;border-width:0 4.2px 4.6px 4.2px;border-color:transparent transparent #000 transparent"></i></div>
<div class="abs b3d" style="left:1723px;top:1106.6px;width:18.6px;height:8.6px"></div>
<div class="abs b3d" style="left:1723px;top:1401.6px;width:18.6px;height:17.8px"><i class="ar" style="left:4.6px;top:5.2px;border-width:4.6px 4.2px 0 4.2px;border-color:#000 transparent transparent transparent"></i></div>
<div class="abs track" style="left:807px;top:1420px;width:916px;height:18px"></div>
<div class="abs b3d" style="left:806.6px;top:1420px;width:17.8px;height:18px"><i class="ar" style="left:4.4px;top:4px;border-width:4.2px 4.6px 4.2px 0;border-color:transparent #8a8a8a transparent transparent"></i></div>
<div class="abs b3d" style="left:1705px;top:1420px;width:17.8px;height:18px"><i class="ar" style="left:5.6px;top:4px;border-width:4.2px 0 4.2px 4.6px;border-color:transparent transparent transparent #8a8a8a"></i></div>
<div class="abs" style="left:1723px;top:1420px;width:19px;height:18px;background:#c6c6c6"></div>
<div class="abs" id="status"><span class="abs" style="left:28px;top:2.4px">21.587 x 27.937 см</span></div>
<div class="abs" id="frameLd"></div><div class="abs" id="frameB"></div>
</body>
</html>
